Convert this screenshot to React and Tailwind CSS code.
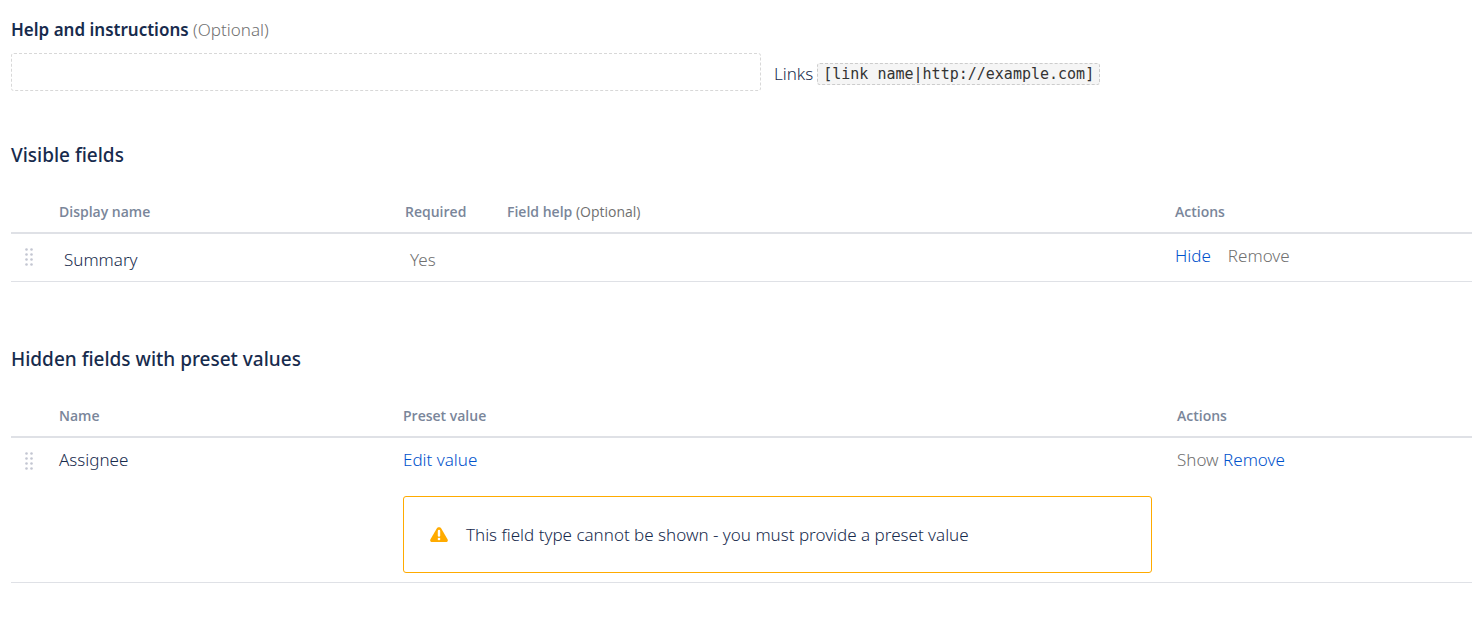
import React from 'react';

function Grip() {
  return (
    <svg width="10" height="20" viewBox="0 0 10 20" fill="#c3c6d1" aria-hidden="true">
      {[1, 6, 11, 16].map((y) => (
        <React.Fragment key={y}>
          <circle cx="1.5" cy={y + 0.5} r="1.3" />
          <circle cx="6.5" cy={y + 0.5} r="1.3" />
        </React.Fragment>
      ))}
    </svg>
  );
}

function WarningIcon() {
  return (
    <svg className="shrink-0" width="18" height="16" viewBox="0 0 18 16" aria-hidden="true">
      <path
        d="M6.600 1.700C7.700-.1 10.300-.1 11.400 1.700L17.500 12.300C18.300 13.900 17.500 15 16 15H2C.5 15-.3 13.900.5 12.300z"
        fill="#ffab00"
      />
      <path d="M9 4v4.500" stroke="#fff" strokeWidth="2.400" strokeLinecap="round" />
      <circle cx="9" cy="12" r="1.300" fill="#fff" />
    </svg>
  );
}

function Th({ children }) {
  return (
    <th scope="col" className="h-11 border-b-2 border-[#dfe1e6] pt-[2px] text-left align-middle font-['Open_Sans','Noto_Sans',sans-serif] text-sm font-semibold text-[#7a869a]">
      {children}
    </th>
  );
}

function Td({ children, className = 'pr-2' }) {
  return <td className={`border-b border-[#dfe1e6] pt-2 align-top ${className}`}>{children}</td>;
}

function LinkTo({ children }) {
  return (
    <a href="#" className="text-[#0052cc] hover:underline">
      {children}
    </a>
  );
}

export default function App() {
  return (
    <main className="bg-white pt-4 pb-10 pl-[11px] font-['Noto_Sans','Open_Sans',sans-serif] text-[17px] leading-7 font-[350] text-[#172b4d]">
      <label htmlFor="help" className="block">
        <strong className="font-semibold">Help and instructions</strong>{' '}
        <span className="text-[#707070]">(Optional)</span>
      </label>
      <div className="mt-[9px] flex items-center gap-[13px]">
        <input
          id="help"
          type="text"
          className="h-[38px] w-full max-w-[750px] rounded-[3px] border border-dashed border-[#d8d8d8] px-2 outline-none"
        />
        <p className="flex items-center gap-1 pt-[3px] whitespace-nowrap">
          Links
          <code className="rounded-[3px] border border-dashed border-[#cccccc] bg-[#f5f5f5] px-[5px] font-['DejaVu_Sans_Mono',monospace] text-[15px] leading-5 font-normal text-[#333333]">
            [link name|http://example.com]
          </code>
        </p>
      </div>

      <h2 className="mt-[50px] text-[19px] leading-7 font-medium">Visible fields</h2>
      <table className="mt-[21px] w-full table-fixed border-separate border-spacing-0">
        <colgroup>
          <col className="w-[48px]" />
          <col className="w-[346px]" />
          <col className="w-[102px]" />
          <col />
          <col className="w-[297px]" />
        </colgroup>
        <thead>
          <tr>
            <Th />
            <Th>Display name</Th>
            <Th>Required</Th>
            <Th>
              Field help <span className="font-normal text-[#707070]">(Optional)</span>
            </Th>
            <Th>Actions</Th>
          </tr>
        </thead>
        <tbody>
          <tr className="h-12">
            <Td className="pl-[14px]">
              <div className="pt-[6px]"><Grip /></div>
            </Td>
            <Td>
              <div className="px-[5px] pt-1">Summary</div>
            </Td>
            <Td>
              <div className="px-[5px] pt-1 text-[#707070]">Yes</div>
            </Td>
            <Td />
            <Td>
              <div className="flex gap-[17px]">
                <LinkTo>Hide</LinkTo>
                <span className="text-[#707070]">Remove</span>
              </div>
            </Td>
          </tr>
        </tbody>
      </table>

      <h2 className="mt-[63px] text-[19px] leading-7 font-medium">Hidden fields with preset values</h2>
      <table className="mt-[21px] w-full table-fixed border-separate border-spacing-0">
        <colgroup>
          <col className="w-[48px]" />
          <col className="w-[344px]" />
          <col />
          <col className="w-[295px]" />
        </colgroup>
        <thead>
          <tr>
            <Th />
            <Th>Name</Th>
            <Th>Preset value</Th>
            <Th>Actions</Th>
          </tr>
        </thead>
        <tbody>
          <tr>
            <Td className="pl-[14px]">
              <div className="pt-[6px]"><Grip /></div>
            </Td>
            <Td>Assignee</Td>
            <Td className="pr-[25px] pb-[9px]">
              <LinkTo>Edit value</LinkTo>
              <div role="alert" className="mt-[22px] flex items-center gap-[18px] rounded-[3px] border border-[#ffab00] px-[26px] pt-6 pb-[23px]">
                <WarningIcon />
                <p>This field type cannot be shown - you must provide a preset value</p>
              </div>
            </Td>
            <Td>
              <span className="text-[#707070]">Show</span> <LinkTo>Remove</LinkTo>
            </Td>
          </tr>
        </tbody>
      </table>
    </main>
  );
}
